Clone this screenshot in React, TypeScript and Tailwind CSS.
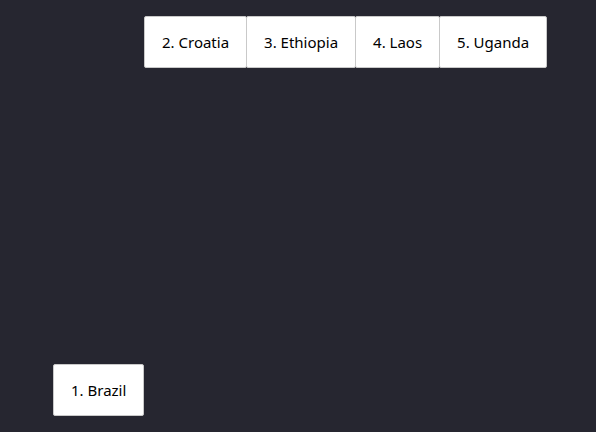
import React from 'react'

const top = ['2. Croatia', '3. Ethiopia', '4. Laos', '5. Uganda']

function Tile({ label, className = '' }: { label: string; className?: string }) {
    return (
        <div className={`h-[52px] flex items-center px-[17px] bg-white border border-[#c9c9c9] rounded-[2px] text-[15px] text-black ${className}`}>
            {label}
        </div>
    )
}

export default function App() {
    return (
        <div className="w-[596px] h-[432px] bg-[#262630] overflow-hidden flex flex-col" style={{ fontFamily: '"Noto Sans", "Open Sans", sans-serif' }}>
            <div className="flex mt-[16px] ml-[144px]">
                {top.map((t, i) => (
                    <Tile key={t} label={t} className={i > 0 ? '-ml-px' : ''} />
                ))}
            </div>
            <div className="flex mt-[296px] ml-[53px]">
                <Tile label="1. Brazil" />
            </div>
        </div>
    )
}
